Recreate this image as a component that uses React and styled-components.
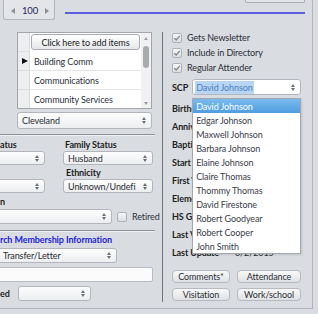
import React from 'react';
import styled, { createGlobalStyle } from 'styled-components';

const Global = createGlobalStyle`
  html, body { margin: 0; padding: 0; background: #d9dce0; }
  body { font-family: Lato, "Noto Sans", sans-serif; font-size: 9px; letter-spacing: -0.1px; color: #2e3038; }
  * { box-sizing: border-box; }
`;

const Frame = styled.div`
  width: 313px;
  height: 309px;
  border-right: 1px solid #b0b4ba;
  border-bottom: 1px solid #b0b4ba;
  display: flex;
  flex-direction: column;
  overflow: hidden;
`;

const TopBar = styled.div`
  height: 32px;
  flex: none;
  display: grid;
  grid-template-columns: 52px 1fr;
  column-gap: 10px;
  padding: 0 7px 0 3px;
  align-items: start;
`;

const PagerTab = styled.div`
  height: 20px;
  border: 1px solid #b3b7bd;
  border-top: none;
  border-radius: 0 0 3px 3px;
  background: #e3e5e8;
  display: flex;
  align-items: center;
  justify-content: space-between;
  padding: 2px 5px 0 7px;
  font-size: 9.5px;
  color: #23255a;
`;

const PagerArrow = styled.span`
  width: 0;
  height: 0;
  border-top: 3.5px solid transparent;
  border-bottom: 3.5px solid transparent;
  ${p => (p.$left ? 'border-right: 4px solid #8c9096;' : 'border-left: 4px solid #8c9096;')}
`;

const TopRight = styled.div`
  display: flex;
  flex-direction: column;
  align-items: flex-end;
`;

const ButtonStub = styled.div`
  width: 60px;
  height: 3px;
  border: 1px solid #a9adb3;
  border-top: none;
  border-radius: 0 0 2px 2px;
  background: #e2e4e7;
`;

const BlueLine = styled.div`
  align-self: stretch;
  height: 2px;
  margin-top: 9px;
  background: #5b5fe6;
`;

const Body = styled.div`
  flex: 1;
  display: grid;
  grid-template-columns: 162px 1fr;
  min-height: 0;
`;

const LeftPane = styled.div`
  overflow: hidden;
  display: flex;
  flex-direction: column;
`;

const ListBox = styled.div`
  margin-left: 17px;
  width: 135px;
  height: 77px;
  border: 1px solid #a2a6ac;
  background: #fff;
  display: flex;
  overflow: hidden;
`;

const ListBody = styled.div`
  flex: 1;
  display: flex;
  flex-direction: column;
  overflow: hidden;
`;

const ListRow = styled.div`
  height: 19px;
  flex: none;
  display: flex;
`;

const RowHead = styled.div`
  width: 12px;
  flex: none;
  background: #eceef0;
  border-right: 1px solid #d7d9dc;
  border-bottom: 1px solid #dcdee1;
  display: flex;
  align-items: center;
  justify-content: center;
`;

const Marker = styled.span`
  width: 0;
  height: 0;
  border-top: 3.5px solid transparent;
  border-bottom: 3.5px solid transparent;
  border-left: 6px solid #111;
  margin-left: 2px;
`;

const Cell = styled.div`
  flex: 1;
  display: flex;
  align-items: center;
  padding-left: 4px;
  border-bottom: 1px solid #e4e5e7;
  color: #2e3040;
`;

const AddButton = styled.div`
  flex: 1;
  margin: 1px 1px 2px 1px;
  border: 1px solid #a7abb1;
  border-radius: 3px;
  background: linear-gradient(#ffffff, #e5e7ea);
  display: flex;
  align-items: center;
  justify-content: center;
  color: #222;
`;

const ScrollBar = styled.div`
  width: 10px;
  flex: none;
  background: #f1f1f2;
  display: flex;
  flex-direction: column;
  align-items: center;
`;

const ScrollArrowCell = styled.div`
  height: ${p => p.$h}px;
  display: flex;
  align-items: center;
  justify-content: center;
`;

const SmallTri = styled.span`
  width: 0;
  height: 0;
  border-left: 2.5px solid transparent;
  border-right: 2.5px solid transparent;
  ${p => (p.$up ? 'border-bottom: 3px solid #9a9da2;' : 'border-top: 3px solid #9a9da2;')}
`;

const ScrollTrack = styled.div`
  flex: 1;
`;

const Thumb = styled.div`
  width: 6px;
  height: 22px;
  margin-top: 3px;
  border-radius: 3px;
  background: #a8aaad;
`;

const SelectBox = styled.div`
  height: ${p => p.$h || 15}px;
  width: ${p => (p.$w ? `${p.$w}px` : 'auto')};
  margin-left: ${p => p.$ml || 0}px;
  padding-left: ${p => p.$pl || 4}px;
  border: 1px solid #b2b6bc;
  border-radius: 3px;
  background: linear-gradient(#fdfdfd, #eceef0);
  display: flex;
  align-items: center;
  justify-content: space-between;
  color: #2b2d35;
  flex: none;
  white-space: nowrap;
  overflow: hidden;
`;

const SpinBox = styled.span`
  display: flex;
  flex-direction: column;
  gap: 1px;
  margin-right: 5px;
  flex: none;
`;

const SpinTri = styled.span`
  width: 0;
  height: 0;
  border-left: 2.5px solid transparent;
  border-right: 2.5px solid transparent;
  ${p => (p.$up ? 'border-bottom: 3px solid #6c7076;' : 'border-top: 3px solid #6c7076;')}
`;

const Spinner = () => (
  <SpinBox>
    <SpinTri $up />
    <SpinTri />
  </SpinBox>
);

const Select = ({ children, ...rest }) => (
  <SelectBox {...rest}>
    <span>{children}</span>
    <Spinner />
  </SelectBox>
);

const Separator = styled.div`
  width: 155px;
  height: 2px;
  margin-top: ${p => p.$mt}px;
  border-top: 1px solid #8e9298;
  border-bottom: 1px solid #eef0f2;
  flex: none;
`;

const FieldGrid = styled.div`
  display: grid;
  grid-template-columns: 45px 90px;
  column-gap: 18px;
  grid-template-rows: 14px 14px 14px 14px;
  margin-top: 1px;
  align-items: center;
`;

const Label = styled.div`
  font-weight: 700;
  color: #1e1f24;
  padding-left: ${p => p.$pl || 0}px;
  white-space: nowrap;
  display: flex;
  align-items: center;
  height: ${p => (p.$h ? `${p.$h}px` : 'auto')};
`;

const BlueHeading = styled(Label)`
  color: #2323dc;
`;

const GridSelectCell = styled.div`
  height: 14px;
  display: flex;
  margin-left: ${p => p.$ml || 0}px;
  & > * { flex: 1; }
`;

const InlineRow = styled.div`
  display: flex;
  align-items: center;
  gap: ${p => p.$gap || 5}px;
  margin-top: ${p => p.$mt || 0}px;
  height: ${p => p.$h}px;
  flex: none;
  white-space: nowrap;
`;

const TextInput = styled.div`
  width: 161px;
  margin-left: -8px;
  height: 15px;
  margin-top: 4px;
  border: 1px solid #b7bbc1;
  border-radius: 2px;
  background: #fbfbfc;
  flex: none;
`;

const CheckBoxBox = styled.span`
  width: 10px;
  height: 10px;
  border: 1px solid #aeb2b8;
  border-radius: 2px;
  background: linear-gradient(#f6f7f8, #dcdee1);
  display: inline-flex;
  align-items: center;
  justify-content: center;
  flex: none;
`;

const CheckBox = ({ checked }) => (
  <CheckBoxBox>
    {checked && (
      <svg width="8" height="8" viewBox="0 0 8 8">
        <path d="M1.3 4.2 L3.2 6 L6.8 1.8" fill="none" stroke="#84878c" strokeWidth="1.3" />
      </svg>
    )}
  </CheckBoxBox>
);

const RightPane = styled.div`
  border-left: 1px solid #6f7379;
  margin-bottom: 6px;
  padding-left: 9px;
  display: flex;
  flex-direction: column;
`;

const CheckRow = styled.div`
  height: 15px;
  display: flex;
  align-items: flex-start;
  gap: 5px;
  padding-top: 1px;
  color: #2b2d35;
  & > span:last-child { line-height: 10px; }
`;

const ScpRow = styled.div`
  margin-top: 2px;
  height: 16px;
  display: flex;
  align-items: center;
  gap: 3px;
  flex: none;
`;

const ScpField = styled.div`
  position: relative;
  width: 109px;
  height: 16px;
  margin-left: 1px;
`;

const ScpSelect = styled(SelectBox)`
  height: 16px;
  padding-left: 2px;
  background: #ffffff;
`;

const SelectedText = styled.span`
  background: #b8d6f3;
  color: #4a7ebf;
  padding: 1px 1px;
`;

const Dropdown = styled.div`
  position: absolute;
  top: 19px;
  left: 0;
  width: 109px;
  z-index: 10;
  background: #fff;
  border: 1px solid #a3a8b0;
  box-shadow: 1px 1px 2px rgba(0, 0, 0, 0.12);
  display: flex;
  flex-direction: column;
`;

const DropItem = styled.div`
  height: 14px;
  display: flex;
  align-items: center;
  padding-left: 3px;
  color: ${p => (p.$active ? '#ffffff' : '#3a3d4c')};
  background: ${p => (p.$active ? 'linear-gradient(#7bbbef, #4e9de0)' : 'transparent')};
`;

const InfoSpacer = styled.div`
  height: 4px;
  flex: none;
`;

const InfoRow = styled.div`
  height: 18px;
  display: grid;
  grid-template-columns: 63px 1fr;
  align-items: center;
  flex: none;
`;

const InfoValue = styled.span`
  color: #2b2d35;
`;

const ButtonGrid = styled.div`
  margin-top: 9px;
  display: grid;
  grid-template-columns: 58px 64px;
  column-gap: 7px;
  row-gap: 5px;
`;

const PushButton = styled.div`
  height: 13px;
  border: 1px solid #b6bac0;
  border-radius: 4px;
  background: linear-gradient(#f9f9fa, #dfe1e4);
  display: flex;
  align-items: center;
  justify-content: center;
  color: #2e3038;
`;

const people = [
  'David Johnson',
  'Edgar Johnson',
  'Maxwell Johnson',
  'Barbara Johnson',
  'Elaine Johnson',
  'Claire Thomas',
  'Thommy Thomas',
  'David Firestone',
  'Robert Goodyear',
  'Robert Cooper',
  'John Smith',
];

const infoLabels = [
  'Birthday',
  'Anniversary',
  'Baptized',
  'Start Date',
  'First Visit',
  'Elementary',
  'HS Graduation',
  'Last Visit',
];

export default function App() {
  return (
    <>
      <Global />
      <Frame>
        <TopBar>
          <PagerTab>
            <PagerArrow $left />
            <span>100</span>
            <PagerArrow />
          </PagerTab>
          <TopRight>
            <ButtonStub />
            <BlueLine />
          </TopRight>
        </TopBar>
        <Body>
          <LeftPane>
            <ListBox>
              <ListBody>
                <ListRow>
                  <RowHead />
                  <AddButton>Click here to add items</AddButton>
                </ListRow>
                <ListRow>
                  <RowHead><Marker /></RowHead>
                  <Cell>Building Comm</Cell>
                </ListRow>
                <ListRow>
                  <RowHead />
                  <Cell>Communications</Cell>
                </ListRow>
                <ListRow>
                  <RowHead />
                  <Cell>Community Services</Cell>
                </ListRow>
              </ListBody>
              <ScrollBar>
                <ScrollArrowCell $h={10}><SmallTri $up /></ScrollArrowCell>
                <ScrollTrack><Thumb /></ScrollTrack>
                <ScrollArrowCell $h={9}><SmallTri /></ScrollArrowCell>
              </ScrollBar>
            </ListBox>
            <InlineRow $mt={3} $h={17}>
              <Select $h={17} $w={135} $ml={17}>Cleveland</Select>
            </InlineRow>
            <Separator $mt={5} />
            <FieldGrid>
              <Label>atus</Label>
              <Label $pl={2}>Family Status</Label>
              <GridSelectCell $ml={-8}><Select $h={14} /></GridSelectCell>
              <GridSelectCell><Select $h={14}>Husband</Select></GridSelectCell>
              <span />
              <Label $pl={3}>Ethnicity</Label>
              <GridSelectCell $ml={-8}><Select $h={14} /></GridSelectCell>
              <GridSelectCell><Select $h={14}>Unknown/Undefi</Select></GridSelectCell>
            </FieldGrid>
            <Label $h={16}>n</Label>
            <InlineRow $h={15}>
              <Select $h={15} $w={120} $ml={-8} />
              <CheckBox />
              <span>Retired</span>
            </InlineRow>
            <Separator $mt={6} />
            <BlueHeading $h={15}>rch Membership Information</BlueHeading>
            <InlineRow $mt={1} $h={15}>
              <Select $h={15} $w={125} $ml={-8} $pl={10}>Transfer/Letter</Select>
            </InlineRow>
            <TextInput />
            <InlineRow $mt={4} $h={15} $gap={8}>
              <Label>ed</Label>
              <Select $h={15} $w={73} />
            </InlineRow>
          </LeftPane>
          <RightPane>
            <CheckRow><CheckBox checked /><span>Gets Newsletter</span></CheckRow>
            <CheckRow><CheckBox checked /><span>Include in Directory</span></CheckRow>
            <CheckRow><CheckBox checked /><span>Regular Attender</span></CheckRow>
            <ScpRow>
              <Label>SCP</Label>
              <ScpField>
                <ScpSelect>
                  <SelectedText>David Johnson</SelectedText>
                  <Spinner />
                </ScpSelect>
                <Dropdown>
                  {people.map((name, i) => (
                    <DropItem key={name} $active={i === 0}>{name}</DropItem>
                  ))}
                </Dropdown>
              </ScpField>
            </ScpRow>
            <InfoSpacer />
            {infoLabels.map(l => (
              <InfoRow key={l}><Label>{l}</Label><span /></InfoRow>
            ))}
            <InfoRow>
              <Label>Last Update</Label>
              <InfoValue>6/2/2015</InfoValue>
            </InfoRow>
            <ButtonGrid>
              <PushButton>Comments*</PushButton>
              <PushButton>Attendance</PushButton>
              <PushButton>Visitation</PushButton>
              <PushButton>Work/school</PushButton>
            </ButtonGrid>
          </RightPane>
        </Body>
      </Frame>
    </>
  );
}
